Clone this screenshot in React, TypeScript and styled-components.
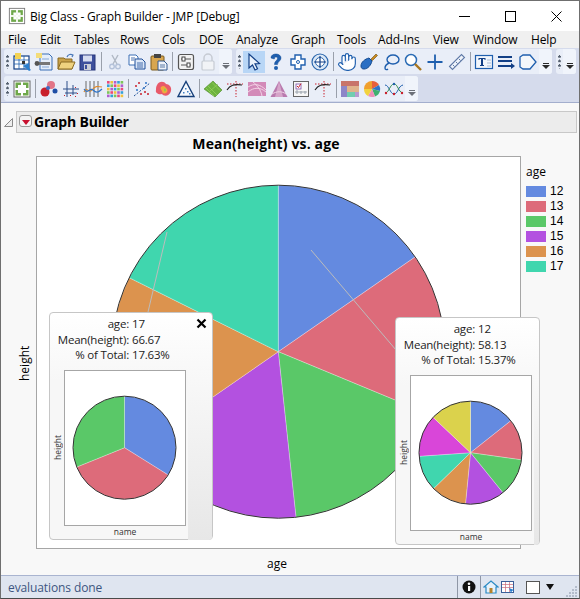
import type { ReactNode } from 'react';
import styled, { createGlobalStyle } from 'styled-components';
import { Hand } from 'lucide-react';

const UI_FONT = '"Open Sans", "Noto Sans", "Liberation Sans", sans-serif';

const COLORS = ['#648ae0', '#dd6b7a', '#5ac868', '#b351e0', '#dc934e', '#40d6ae', '#d946d9', '#dbd24c'];

const GlobalStyle = createGlobalStyle`
  html, body {
    margin: 0;
    padding: 0;
    background: #fff;
  }
  body {
    font-family: ${UI_FONT};
    color: #000;
  }
`;

const Window = styled.div`
  width: 580px;
  height: 599px;
  box-sizing: border-box;
  border: 1px solid #6f6f6f;
  border-bottom-color: #4a4a4a;
  display: flex;
  flex-direction: column;
  overflow: hidden;
`;

const TitleBar = styled.header`
  height: 30px;
  flex: none;
  display: flex;
  align-items: center;
  padding-left: 7px;
  gap: 4px;
  background: #fff;
`;

const TitleText = styled.span`
  font-size: 12px;
  letter-spacing: -0.18px;
`;

const WindowButtons = styled.div`
  margin-left: auto;
  display: flex;
`;

const WindowButton = styled.div`
  width: 46px;
  height: 30px;
  display: flex;
  align-items: center;
  justify-content: center;
`;

const MenuBar = styled.nav`
  height: 17px;
  flex: none;
  display: flex;
  align-items: center;
  background: #f0f0f0;
  padding-left: 7px;
`;

const MenuItem = styled.span<{ $w: number }>`
  width: ${(p) => p.$w}px;
  font-size: 12px;
  letter-spacing: -0.15px;
  white-space: nowrap;
`;

const ToolArea = styled.div`
  flex: none;
  background: #d5dbec;
  border-bottom: 1px solid #a3aecd;
  padding: 1px 3px 1px;
  display: flex;
  flex-direction: column;
  gap: 2px;
`;

const ToolRow = styled.div`
  display: flex;
  gap: 4px;
  height: 25px;
`;

const Toolbar = styled.div`
  display: flex;
  align-items: center;
  background: #e9eef8;
  border-radius: 3px;
`;

const Gripper = styled.div`
  width: 7px;
  height: 14px;
  flex: none;
  background: radial-gradient(circle at 1.5px 1.5px, #55606f 1.2px, transparent 1.4px) 2px 0 / 7px 4.5px repeat-y;
`;

const ToolSep = styled.div`
  width: 5px;
  height: 19px;
  flex: none;
  display: flex;
  justify-content: center;

  &::before {
    content: '';
    width: 1px;
    background: #9aa0ab;
  }
`;

const ToolButton = styled.div<{ $active?: boolean }>`
  width: 22px;
  height: 22px;
  flex: none;
  display: flex;
  align-items: center;
  justify-content: center;
  background: ${(p) => (p.$active ? '#b8d6f6' : 'transparent')};
`;

const Overflow = styled.div<{ $dim?: boolean }>`
  width: 13px;
  height: 100%;
  flex: none;
  display: flex;
  flex-direction: column;
  align-items: center;
  justify-content: flex-end;
  gap: 1px;
  padding-bottom: 5px;
  box-sizing: border-box;
  background: #f0f4fb;
  border-radius: 0 3px 3px 0;
  color: ${(p) => (p.$dim ? '#6c7078' : '#2a2a2a')};

  &::before {
    content: '';
    width: 6px;
    height: 1px;
    background: currentColor;
  }

  &::after {
    content: '';
    border-left: 4px solid transparent;
    border-right: 4px solid transparent;
    border-top: 4px solid currentColor;
  }
`;

const Content = styled.main`
  flex: 1;
  min-height: 0;
  background: #f8f8f8;
  display: flex;
  flex-direction: column;
`;

const OutlineRow = styled.div`
  display: flex;
  align-items: center;
  gap: 3px;
  padding: 8px 2px 0 3px;
`;

const Disclosure = styled.div`
  width: 9px;
  height: 9px;
  flex: none;
  display: flex;
`;

const OutlineHeader = styled.div`
  flex: 1;
  height: 22px;
  box-sizing: border-box;
  display: flex;
  align-items: center;
  gap: 2px;
  padding: 0 0 2px 2px;
  background: #ececec;
  border: 1px solid #c8c8c8;
`;

const RedMenu = styled.div`
  width: 13px;
  height: 12px;
  box-sizing: border-box;
  display: flex;
  align-items: center;
  justify-content: center;
  background: #f4f4f4;
  border: 1px solid #9a9a9a;
  border-radius: 3px;

  &::before {
    content: '';
    margin-top: 2px;
    border-left: 4px solid transparent;
    border-right: 4px solid transparent;
    border-top: 5px solid #c8102e;
  }
`;

const OutlineTitle = styled.span`
  font-size: 14px;
  font-weight: 700;
  letter-spacing: -0.2px;
`;

const PlotGrid = styled.section`
  flex: 1;
  display: grid;
  grid-template-columns: 35px 485px 1fr;
  grid-template-rows: 23px 393px 1fr;
`;

const PlotTitle = styled.h2`
  grid-column: 1 / 4;
  margin: 0 0 2px;
  padding-right: 48px;
  font-size: 14px;
  font-weight: 700;
  letter-spacing: 0.15px;
  text-align: center;
  line-height: 21px;
`;

const YAxisLabel = styled.div`
  display: flex;
  align-items: center;
  justify-content: center;
  padding: 0 11px 22px 0;
  writing-mode: vertical-rl;
  transform: rotate(180deg);
  font-size: 12px;
`;

const PlotFrame = styled.div`
  position: relative;
  box-sizing: border-box;
  background: #fff;
  border: 1px solid #a6a6a6;
`;

const FullSvg = styled.svg`
  display: block;
  width: 100%;
  height: 100%;
`;

const Legend = styled.aside`
  padding: 8px 0 0 5px;
`;

const LegendTitle = styled.div`
  font-size: 12px;
  line-height: 16px;
  margin-bottom: 4px;
`;

const LegendRow = styled.div`
  display: flex;
  align-items: center;
  gap: 4px;
  height: 15px;
  font-family: "Liberation Sans", sans-serif;
  font-size: 12px;
  line-height: 15px;
`;

const Swatch = styled.span<{ $color: string }>`
  width: 20px;
  height: 11px;
  background: ${(p) => p.$color};
`;

const XAxisLabel = styled.div`
  grid-column: 2;
  text-align: center;
  padding-right: 3px;
  font-size: 12px;
  line-height: 29px;
`;

const Popup = styled.div<{ $left: number; $top: number; $width: number }>`
  position: absolute;
  left: ${(p) => p.$left}px;
  top: ${(p) => p.$top}px;
  width: ${(p) => p.$width}px;
  height: 228px;
  box-sizing: border-box;
  background: linear-gradient(#fff, #f7f7f7 30%);
  border: 1px solid #c6c6c6;
  border-radius: 4px;
  padding-top: 3px;
`;

const CloseButton = styled.svg`
  position: absolute;
  right: 5px;
  top: 5px;
  width: 11px;
  height: 11px;
`;

const Readout = styled.dl`
  display: grid;
  grid-template-columns: 79px auto;
  column-gap: 3px;
  margin: 0 0 7px;
  height: 47px;
  font-size: 11.5px;
  line-height: 15.6px;
  letter-spacing: -0.2px;
  color: #222;

  dt {
    text-align: right;
  }
  dd {
    margin: 0;
  }
`;

const PopupBody = styled.div`
  display: flex;
  align-items: stretch;
  height: 170px;
`;

const MiniYLabel = styled.div`
  width: 14px;
  height: 156px;
  flex: none;
  display: flex;
  align-items: center;
  justify-content: center;
  font-size: 8.5px;
  writing-mode: vertical-rl;
  transform: rotate(180deg);
  color: #333;
`;

const MiniColumn = styled.div`
  width: 122px;
  flex: none;
  display: flex;
  flex-direction: column;
`;

const MiniFrame = styled.div`
  height: 156px;
  box-sizing: border-box;
  background: #fff;
  border: 1px solid #a6a6a6;
`;

const MiniName = styled.div`
  font-size: 8.5px;
  line-height: 11px;
  text-align: center;
  color: #333;
`;

const FadeStrip = styled.div`
  flex: 1;
  margin-left: 2px;
  background: linear-gradient(#f9f9f9, #e7e7e7);
  border-radius: 0 0 3px 0;
`;

const StatusBar = styled.footer`
  height: 22px;
  flex: none;
  box-sizing: content-box;
  display: flex;
  align-items: center;
  position: relative;
  background: #dfe5f0;
  border-top: 1px solid #a9b4d0;
  padding-left: 7px;
`;

const StatusText = styled.span`
  font-size: 12px;
  color: #3d5580;
  letter-spacing: -0.1px;
`;

const StatusCell = styled.div`
  display: flex;
  align-items: center;
  height: 100%;
  box-sizing: border-box;
  border-left: 1px solid #8f97a6;
`;

const StatusTools = styled.div`
  margin-left: auto;
  display: flex;
  align-items: center;
  height: 100%;
`;

const StatusIcon = styled.div<{ $w: number }>`
  width: ${(p) => p.$w}px;
  display: flex;
  justify-content: center;
`;

const ColorBox = styled.div`
  width: 14px;
  height: 13px;
  box-sizing: border-box;
  margin-left: 11px;
  background: #fff;
  border: 1px solid #555;
`;

const ColorArrow = styled.div`
  margin: 0 25px 0 6px;
  border-left: 4px solid transparent;
  border-right: 4px solid transparent;
  border-top: 6px solid #111;
`;

const ResizeGrip = styled.svg`
  position: absolute;
  right: 1px;
  bottom: 1px;
  width: 12px;
  height: 12px;
`;

function polar(cx: number, cy: number, r: number, deg: number) {
  const a = (deg * Math.PI) / 180;
  return [cx + r * Math.sin(a), cy - r * Math.cos(a)];
}

function PieSlices({ cx, cy, r, stops, edge }: { cx: number; cy: number; r: number; stops: number[]; edge: number }) {
  const all = [0, ...stops, 360];
  return (
    <>
      {all.slice(0, -1).map((from, i) => {
        const to = all[i + 1];
        const [x1, y1] = polar(cx, cy, r, from);
        const [x2, y2] = polar(cx, cy, r, to);
        const large = to - from > 180 ? 1 : 0;
        return (
          <path
            key={from}
            d={`M${cx} ${cy}L${x1} ${y1}A${r} ${r} 0 ${large} 1 ${x2} ${y2}Z`}
            fill={COLORS[i]}
            stroke="#fff"
            strokeOpacity={0.45}
            strokeWidth={0.6}
          />
        );
      })}
      <circle cx={cx} cy={cy} r={r} fill="none" stroke="#333" strokeWidth={edge} />
    </>
  );
}

function MiniPie({ stops }: { stops: number[] }) {
  return (
    <FullSvg viewBox="0 0 120 154">
      <PieSlices cx={59.5} cy={76.7} r={51.5} stops={stops} edge={1} />
    </FullSvg>
  );
}

function Svg({ children }: { children: ReactNode }) {
  return (
    <svg width="20" height="20" viewBox="0 0 20 20">
      {children}
    </svg>
  );
}

const NAVY = '#123f86';
const BLUE = '#1f5fae';

const IconNewTable = () => (
  <Svg>
    <rect x="2" y="4" width="15" height="13" fill="#fff" stroke={NAVY} strokeWidth="1.2" />
    <path d="M2 8h15M2 12h15M7 4v13M12 4v13" stroke={BLUE} strokeWidth="0.8" />
    <rect x="3" y="1" width="6" height="6" fill="#f3d354" />
    <path d="M11 14l6-3v5l2 2-2 1-2-2z" fill="#2b7fcf" />
    <rect x="10" y="9" width="3" height="3" fill="#333" />
  </Svg>
);

const IconScript = () => (
  <Svg>
    <path d="M6 2h9l3 3v13H6z" fill="#e5eefa" stroke="#3a6fb5" />
    <rect x="2" y="1" width="6" height="5" fill="#f3dc7a" />
    <rect x="1" y="10" width="15" height="3" fill="#777" />
    <circle cx="3" cy="11.5" r="2.4" fill="#555" />
    <path d="M8 7h7M8 15h7" stroke="#89a9d4" />
  </Svg>
);

const IconOpen = () => (
  <Svg>
    <path d="M2 6h6l1 1h7v10H2z" fill="#c9a24a" stroke="#8a6a22" />
    <path d="M2 17l3-7h14l-3 7z" fill="#efd27f" stroke="#8a6a22" />
    <path d="M11 5c1-3 4-3 6-2l-1 2" fill="none" stroke="#4a78b8" strokeWidth="1.2" />
  </Svg>
);

const IconSave = () => (
  <Svg>
    <rect x="2" y="3" width="15" height="15" fill="#3d4f9c" stroke="#27347a" />
    <rect x="5" y="3.5" width="9" height="6" fill="#d6dcf0" />
    <rect x="6" y="12" width="7" height="6" fill="#c9ccd6" />
    <rect x="7" y="13" width="2" height="4" fill="#3d4f9c" />
  </Svg>
);

const IconCut = () => (
  <Svg>
    <path d="M7 3l5 9M13 3L8 12" stroke="#b0b8c4" strokeWidth="1.4" />
    <circle cx="7" cy="14.500" r="2.300" fill="none" stroke="#b4c2da" strokeWidth="1.4" />
    <circle cx="13" cy="14.500" r="2.300" fill="none" stroke="#b4c2da" strokeWidth="1.4" />
  </Svg>
);

const IconCopy = () => (
  <Svg>
    <path d="M2 3h7l2 2v8H2z" fill="#fff" stroke="#3b6fb5" />
    <path d="M8 7h7l3 3v7H8z" fill="#dbe7f7" stroke="#1f4f99" />
    <path d="M10 11h6M10 13h6M10 15h6M4 6h4M4 8h3" stroke="#1f4f99" strokeWidth="0.8" />
  </Svg>
);

const IconPaste = () => (
  <Svg>
    <rect x="2" y="4" width="13" height="14" rx="1" fill="#d8a64f" stroke="#7a5a1e" />
    <rect x="5" y="2" width="7" height="4" fill="#444" />
    <path d="M9 9h6l3 3v6H9z" fill="#eef3fb" stroke="#33588f" />
    <path d="M11 13h5M11 15h5" stroke="#33588f" strokeWidth="0.8" />
  </Svg>
);

const IconSettings = () => (
  <Svg>
    <rect x="2.500" y="2.500" width="15" height="15" rx="2" fill="#f2f2f2" stroke="#555" strokeWidth="1.2" />
    <path d="M5 7h10M5 13h10" stroke="#555" />
    <rect x="6" y="5" width="3" height="4" fill="#fff" stroke="#444" />
    <rect x="11" y="11" width="3" height="4" fill="#fff" stroke="#444" />
  </Svg>
);

const IconLock = () => (
  <Svg>
    <path d="M6 9V6a4 4 0 018 0v3" fill="none" stroke="#c6cbd3" strokeWidth="1.5" />
    <rect x="4" y="9" width="12" height="9" rx="1" fill="#f1f3f6" stroke="#c6cbd3" strokeWidth="1.2" />
  </Svg>
);

const IconArrow = () => (
  <Svg>
    <path d="M5 2v14l3.500-3 2.500 5 2.500-1.200-2.500-5 4.500-.3z" fill="#eaf2fb" stroke={NAVY} strokeWidth="1.2" />
  </Svg>
);

const IconHelp = () => (
  <Svg>
    <path
      d="M5 6c0-3 2.500-4 5-4s5 1.500 5 4c0 3-3.500 3.500-3.500 6.500H8.500C8.500 9 11.500 8.500 11.500 6.500 11.500 5.500 11 5 10 5S8.500 5.500 8.300 7z"
      fill={BLUE}
      stroke="#0f4a96"
      strokeWidth="0.5"
    />
    <circle cx="10" cy="16" r="2" fill={BLUE} />
  </Svg>
);

const IconCross = () => (
  <Svg>
    <path d="M7 3h6v4h4v6h-4v4H7v-4H3V7h4z" fill="#fff" stroke={BLUE} strokeWidth="1.4" />
    <circle cx="10" cy="10" r="1.500" fill="none" stroke={BLUE} />
  </Svg>
);

const IconTarget = () => (
  <Svg>
    <circle cx="10" cy="10" r="8" fill="#dce8f6" stroke="#2a66ad" strokeWidth="1.2" />
    <circle cx="10" cy="10" r="4.500" fill="#fff" stroke="#2a66ad" />
    <path d="M10 4v12M4 10h12" stroke={NAVY} strokeWidth="1.2" />
  </Svg>
);

const IconHand = () => <Hand size={20} color="#1f5fae" fill="#fff" strokeWidth={1.4} />;

const IconBrush = () => (
  <Svg>
    <path d="M2 14c0-4 4-7 8-8l3 3c-1 4-4 8-8 8-2 0-3-1-3-3z" fill="#2a6fc4" stroke="#134a90" />
    <path d="M12 7l5-5 1.500 1.500-5 5z" fill="#c98a1e" stroke="#6a4a12" strokeWidth="0.6" />
  </Svg>
);

const IconLasso = () => (
  <Svg>
    <ellipse cx="12" cy="7.500" rx="6" ry="4.500" fill="none" stroke={BLUE} strokeWidth="1.4" />
    <path d="M8 11c-2 1-4 3-4 5 0 2 2 2 3 1" fill="none" stroke={BLUE} strokeWidth="1.4" />
  </Svg>
);

const IconZoom = () => (
  <Svg>
    <circle cx="8" cy="8" r="5.500" fill="#fff" stroke="#2b6cb5" strokeWidth="1.5" />
    <path d="M12 12l6 6" stroke="#a8751f" strokeWidth="2.400" />
  </Svg>
);

const IconPlus = () => (
  <Svg>
    <path d="M10 2.500v15M2.500 10h15" stroke={BLUE} strokeWidth="1.800" />
  </Svg>
);

const IconRuler = () => (
  <Svg>
    <path d="M2.500 14.500L14.500 2.500l3 3L5.500 17.500z" fill="#eef3fa" stroke="#5f79a6" strokeWidth="1.100" />
    <path d="M6 13l1.500 1.500M9 10l1.500 1.500M12 7l1.500 1.500" stroke="#5f79a6" />
  </Svg>
);

const IconTextBox = () => (
  <Svg>
    <rect x="1.500" y="3.500" width="17" height="13" fill="#f2f6fb" stroke={BLUE} strokeWidth="1.200" />
    <path d="M4.500 6h7v2h-1V7H9v6h1v1H6v-1h1V7H5.500v1h-1z" fill={NAVY} />
    <path d="M13 8h4M13 11h4M13 14h4" stroke="#a8bbd6" />
  </Svg>
);

const IconLines = () => (
  <Svg>
    <path d="M2 5h14M2 9h14" stroke={NAVY} strokeWidth="2" />
    <path d="M2 14h13" stroke={NAVY} strokeWidth="2" />
    <path d="M15 11l4 3-4 3z" fill={NAVY} />
  </Svg>
);

const IconShape = () => (
  <Svg>
    <path d="M2 5l3-2h7l6 7-6 7H5l-3-2z" fill="#f4f7fb" stroke={BLUE} strokeWidth="1.300" />
  </Svg>
);

const BlocksMark = () => (
  <>
    <rect x="3.500" y="3.500" width="5.500" height="5.500" fill="#6fa84a" />
    <rect x="11" y="3.500" width="5.500" height="5.500" fill="#6fa84a" />
    <rect x="3.500" y="11" width="5.500" height="5.500" fill="#6fa84a" />
    <rect x="11" y="11" width="5.500" height="5.500" fill="#6fa84a" />
    <path d="M6 6h3v3H6zM11 6h3v3h-3zM6 11h3v3H6zM11 11h3v3h-3z" fill="#fff" />
  </>
);

const IconBuilder = () => (
  <Svg>
    <rect x="2" y="2" width="16" height="16" fill="#fff" stroke="#666" />
    <BlocksMark />
  </Svg>
);

const IconBubbles = () => (
  <Svg>
    <circle cx="6" cy="13" r="4.500" fill="#c8202c" />
    <circle cx="12" cy="6" r="4" fill="#e0566a" opacity="0.8" />
    <circle cx="16" cy="12" r="2.500" fill="#1f4fa6" />
    <circle cx="9" cy="9" r="2" fill="#3f6bc4" />
  </Svg>
);

const IconCrossGrid = () => (
  <Svg>
    <path d="M6 2v16M2 10h16M12 6v10M4 14h12" stroke="#2d4f8a" />
    <path d="M14 8h1v1h-1zM16 14h1v1h-1zM9 16h1v1H9zM14 17h1v1h-1zM3 16h1v1H3z" fill="#c8202c" />
  </Svg>
);

const IconParallel = () => (
  <Svg>
    <path d="M3 2v16M7 2v16M11 2v16M15 2v16" stroke="#6a6a6a" />
    <path d="M1 13c3-6 5 2 8-2s5-4 10-3" fill="none" stroke="#e08a2a" strokeWidth="1.200" />
    <path d="M1 10c4 6 6-2 9 1s5 3 9-1" fill="none" stroke="#2f74c8" strokeWidth="1.200" />
  </Svg>
);

const HEAT = ['#e94a7a', '#34a0d8', '#f2c23e', '#7fc65a', '#b05ed0'];

const IconHeat = () => (
  <Svg>
    {Array.from({ length: 25 }).map((_, i) => (
      <rect
        key={i}
        x={2 + (i % 5) * 3.4}
        y={2 + Math.floor(i / 5) * 3.4}
        width="2.600"
        height="2.600"
        fill={HEAT[(i * 7 + Math.floor(i / 5)) % 5]}
      />
    ))}
  </Svg>
);

const IconScatterLine = () => (
  <Svg>
    <path d="M2 17L18 4" stroke="#1c4e96" strokeDasharray="2 1.500" />
    <path d="M3 7h2M6 4h2M12 13h2M15 15h2M8 15h2" stroke="#c8202c" strokeWidth="1.400" />
    <path d="M4 11h2M13 4h2M11 9h2" stroke="#2f74c8" strokeWidth="1.400" />
  </Svg>
);

const IconContour = () => (
  <Svg>
    <path d="M3 6c2-4 7-4 9-1 3 0 6 3 5 7-1 5-7 6-9 3-3 1-7-1-6-4 0-2 0-3 1-5z" fill="#e85a6a" />
    <path d="M7 8c2-2 4-1 5 1 2 1 2 4 0 5-2 1-4 0-4-2-1-1-2-3-1-4z" fill="#f2a83e" />
    <path d="M10 10c1-1 2 0 2 1s-1 2-2 1z" fill="#8fd04a" />
  </Svg>
);

const IconTernary = () => (
  <Svg>
    <path d="M10 2.500L18 17.500H2z" fill="#f6f9fd" stroke="#153f7a" strokeWidth="1.400" />
    <path d="M9 9h1.500v1.500H9zM7 13h1.500v1.500H7zM11 12h1.500v1.500H11zM13 14h1.500v1.500H13z" fill="#3f7fc4" />
  </Svg>
);

const IconSurface = () => (
  <Svg>
    <path d="M1 10l9-8 9 9-7 7z" fill="#6db33f" stroke="#4e8a2a" strokeWidth="0.600" />
    <path d="M5 7l9 9M9 3.500l8 8M3 9l8 8M6 13l9-8" stroke="#9ad45e" strokeWidth="0.700" />
  </Svg>
);

const IconProfiler = () => (
  <Svg>
    <path d="M11 2v16" stroke="#c8202c" strokeDasharray="1.500 1.500" />
    <path d="M2 5h16" stroke="#c8202c" strokeDasharray="1.500 1.500" />
    <path d="M2 11c3-5 7-6 15-5" fill="none" stroke="#222" strokeWidth="1.100" />
  </Svg>
);

const IconPinkSurface = () => (
  <Svg>
    <rect x="1" y="3" width="18" height="14" fill="#d38ab8" />
    <path d="M1 8c6-4 12-3 18 3M1 13c6-5 12-5 18 0M6 3c4 3 8 8 9 14" fill="none" stroke="#f3d4e6" />
  </Svg>
);

const IconPinkTriangle = () => (
  <Svg>
    <path d="M10 2L18.500 18H1.500z" fill="#b97aae" />
    <path d="M10 2l4 16H6z" fill="#d6a5c9" />
    <path d="M3 15c5-3 10-3 14 0" fill="none" stroke="#efd4e6" />
  </Svg>
);

const IconChartCheck = () => (
  <Svg>
    <rect x="2.500" y="2.500" width="15" height="15" fill="#f7f7f7" stroke="#666" />
    <rect x="5" y="5" width="5" height="5" fill="#fff" stroke="#7a4fa8" strokeWidth="0.800" />
    <path d="M6 7l1.500 1.500L10 4.500" fill="none" stroke="#c8202c" />
    <path d="M4 13h12M6 11v4M10 12v3M14 12v3" stroke="#9aa3ad" />
  </Svg>
);

const IconTreemap = () => (
  <Svg>
    <rect x="1" y="2" width="18" height="5" fill="#c8746a" />
    <rect x="1" y="7" width="6" height="11" fill="#8d86c8" />
    <rect x="7" y="7" width="12" height="6" fill="#e0b48c" />
    <rect x="7" y="13" width="8" height="5" fill="#72cdb0" />
    <rect x="15" y="13" width="4" height="5" fill="#b79ad0" />
  </Svg>
);

const IconColorPie = () => (
  <Svg>
    <path d="M10 10L10 2A8 8 0 0 1 17 6z" fill="#e8603c" />
    <path d="M10 10L17 6A8 8 0 0 1 18 12z" fill="#2f74c8" />
    <path d="M10 10L18 12A8 8 0 0 1 13 17.500z" fill="#3fb070" />
    <path d="M10 10L13 17.500A8 8 0 0 1 6 17z" fill="#ef8fb8" />
    <path d="M10 10L6 17A8 8 0 0 1 2 10z" fill="#f2d23e" />
    <path d="M10 10L2 10A8 8 0 0 1 10 2z" fill="#f0a02e" />
  </Svg>
);

const IconNetwork = () => (
  <Svg>
    <path d="M1 6c4 0 5 9 9 9s4-8 9-9" fill="none" stroke="#1f5fae" />
    <path d="M1 14c4 0 5-9 9-9s4 8 9 9" fill="none" stroke="#2f8a4a" />
    <circle cx="2" cy="14" r="1.200" fill="#c8202c" />
    <circle cx="10" cy="15" r="1.200" fill="#c8202c" />
    <circle cx="18" cy="14" r="1.200" fill="#c8202c" />
    <circle cx="10" cy="5" r="1.200" fill="#1f5fae" />
  </Svg>
);

type Tool = (() => ReactNode) | 'sep';

const BAR_FILE: Tool[] = [IconNewTable, IconScript, IconOpen, IconSave, 'sep', IconCut, IconCopy, IconPaste, 'sep', IconSettings, IconLock];
const BAR_TOOLS: Tool[] = [
  IconArrow, IconHelp, IconCross, IconTarget, 'sep',
  IconHand, IconBrush, IconLasso, IconZoom, IconPlus, IconRuler, 'sep',
  IconTextBox, IconLines, IconShape,
];
const BAR_GRAPHS: Tool[] = [
  IconBuilder, 'sep',
  IconBubbles, IconCrossGrid, IconParallel, IconHeat, 'sep',
  IconScatterLine, IconContour, IconTernary, 'sep',
  IconSurface, IconProfiler, IconPinkSurface, IconPinkTriangle, IconChartCheck, IconProfiler, 'sep',
  IconTreemap, IconColorPie, IconNetwork,
];

function ToolStrip({ tools, dim }: { tools: Tool[]; dim?: boolean }) {
  return (
    <Toolbar>
      <Gripper />
      {tools.map((T, i) =>
        T === 'sep' ? (
          <ToolSep key={i} />
        ) : (
          <ToolButton key={i} $active={T === IconArrow}>
            <T />
          </ToolButton>
        ),
      )}
      <Overflow $dim={dim} />
    </Toolbar>
  );
}

const MENUS: [string, number][] = [
  ['File', 32], ['Edit', 34], ['Tables', 46], ['Rows', 42], ['Cols', 37], ['DOE', 37], ['Analyze', 55],
  ['Graph', 46], ['Tools', 41], ['Add-Ins', 55], ['View', 40], ['Window', 58], ['Help', 30],
];

const AGES = ['12', '13', '14', '15', '16', '17'];

function DetailPopup({
  left, top, width, age, mean, share, stops, closable,
}: {
  left: number; top: number; width: number; age: string; mean: string; share: string; stops: number[]; closable?: boolean;
}) {
  return (
    <Popup $left={left} $top={top} $width={width}>
      {closable && (
        <CloseButton viewBox="0 0 11 11">
          <path d="M1.500 1.500l8 8M9.500 1.500l-8 8" stroke="#000" strokeWidth="2.200" />
        </CloseButton>
      )}
      <Readout>
        <dt>age:</dt>
        <dd>{age}</dd>
        <dt>Mean(height):</dt>
        <dd>{mean}</dd>
        <dt>% of Total:</dt>
        <dd>{share}</dd>
      </Readout>
      <PopupBody>
        <MiniYLabel>height</MiniYLabel>
        <MiniColumn>
          <MiniFrame>
            <MiniPie stops={stops} />
          </MiniFrame>
          <MiniName>name</MiniName>
        </MiniColumn>
        <FadeStrip />
      </PopupBody>
    </Popup>
  );
}

export default function App() {
  return (
    <>
      <GlobalStyle />
      <Window>
        <TitleBar>
          <svg width="18" height="18" viewBox="0 0 20 20">
            <rect x="1.500" y="1.500" width="17" height="17" fill="#fff" stroke="#777" />
            <BlocksMark />
          </svg>
          <TitleText>Big Class - Graph Builder - JMP [Debug]</TitleText>
          <WindowButtons>
            <WindowButton>
              <svg width="11" height="11" viewBox="0 0 11 11">
                <path d="M0 5.500h11" stroke="#000" />
              </svg>
            </WindowButton>
            <WindowButton>
              <svg width="11" height="11" viewBox="0 0 11 11">
                <rect x="0.500" y="0.500" width="10" height="10" fill="none" stroke="#000" />
              </svg>
            </WindowButton>
            <WindowButton>
              <svg width="11" height="11" viewBox="0 0 11 11">
                <path d="M0.500 0.500l10 10M10.500 0.500l-10 10" stroke="#000" />
              </svg>
            </WindowButton>
          </WindowButtons>
        </TitleBar>
        <MenuBar>
          {MENUS.map(([label, w]) => (
            <MenuItem key={label} $w={w}>
              {label}
            </MenuItem>
          ))}
        </MenuBar>
        <ToolArea>
          <ToolRow>
            <ToolStrip tools={BAR_FILE} dim />
            <ToolStrip tools={BAR_TOOLS} />
            <ToolStrip tools={[]} />
          </ToolRow>
          <ToolRow>
            <ToolStrip tools={BAR_GRAPHS} dim />
          </ToolRow>
        </ToolArea>
        <Content>
          <OutlineRow>
            <Disclosure>
              <svg width="9" height="9" viewBox="0 0 9 9">
                <path d="M8.500 0.500v8h-8z" fill="#eee" stroke="#8a8a8a" />
              </svg>
            </Disclosure>
            <OutlineHeader>
              <RedMenu />
              <OutlineTitle>Graph Builder</OutlineTitle>
            </OutlineHeader>
          </OutlineRow>
          <PlotGrid>
            <PlotTitle>Mean(height) vs. age</PlotTitle>
            <YAxisLabel>height</YAxisLabel>
            <PlotFrame>
              <FullSvg viewBox="0 0 483 391">
                <PieSlices cx={241.3} cy={194.7} r={166.5} stops={[55.3, 112.5, 173.9, 235.3, 296.4]} edge={1} />
                <path d="M274 93L359 193M130 75L111 155" stroke="#bcbcbc" fill="none" />
              </FullSvg>
              <DetailPopup left={12} top={155} width={164} age="17" mean="66.67" share="17.63%" stops={[122, 248]} closable />
              <DetailPopup
                left={358}
                top={160}
                width={145}
                age="12"
                mean="58.13"
                share="15.37%"
                stops={[51.6, 98, 141, 185.6, 225.8, 266, 313.4]}
              />
            </PlotFrame>
            <Legend>
              <LegendTitle>age</LegendTitle>
              {AGES.map((age, i) => (
                <LegendRow key={age}>
                  <Swatch $color={COLORS[i]} />
                  {age}
                </LegendRow>
              ))}
            </Legend>
            <XAxisLabel>age</XAxisLabel>
          </PlotGrid>
        </Content>
        <StatusBar>
          <StatusText>evaluations done</StatusText>
          <StatusTools>
            <StatusCell>
              <StatusIcon $w={22}>
                <svg width="14" height="14" viewBox="0 0 14 14">
                  <circle cx="7" cy="7" r="6.500" fill="#111" />
                  <rect x="6" y="6" width="2.200" height="5" fill="#fff" />
                  <circle cx="7" cy="3.800" r="1.300" fill="#fff" />
                </svg>
              </StatusIcon>
            </StatusCell>
            <StatusCell>
              <StatusIcon $w={20}>
                <svg width="16" height="16" viewBox="0 0 16 16">
                  <path d="M1 8l7-6 7 6h-2v6H3V8z" fill="#e7f1fa" stroke="#2a8ac4" strokeWidth="1.200" />
                  <rect x="6.500" y="9" width="3" height="5" fill="#b5822a" />
                </svg>
              </StatusIcon>
              <svg width="14" height="14" viewBox="0 0 14 14">
                <rect x="0.500" y="1.500" width="12" height="11" fill="#fff" stroke="#3a5f9a" />
                <path d="M1 4.500h11M1 7.500h11M4.500 2v10M8.500 2v10" stroke="#c96a7a" strokeWidth="0.700" />
                <path d="M8 8l5 2-2 1-1 2z" fill="#2b7fcf" />
              </svg>
              <ColorBox />
              <ColorArrow />
            </StatusCell>
          </StatusTools>
          <ResizeGrip viewBox="0 0 12 12">
            <path d="M9 1h2v2H9zM6 4h2v2H6zM9 4h2v2H9zM3 7h2v2H3zM6 7h2v2H6zM9 7h2v2H9zM0 10h2v2H0zM3 10h2v2H3zM6 10h2v2H6zM9 10h2v2H9z" fill="#b3bccb" />
          </ResizeGrip>
        </StatusBar>
      </Window>
    </>
  );
}
